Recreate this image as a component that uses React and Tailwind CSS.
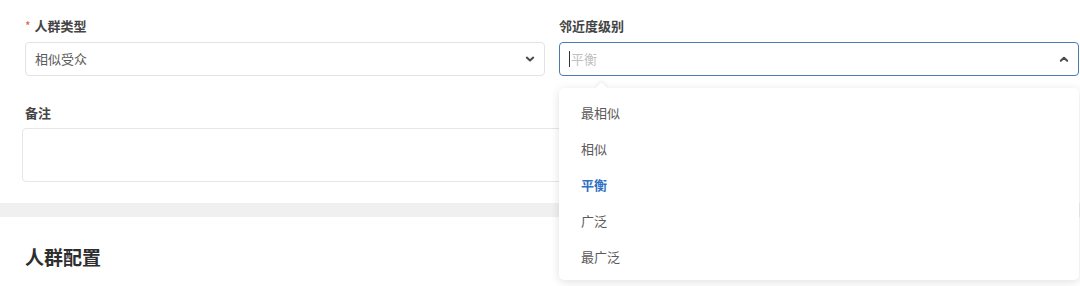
const levels = ['最相似', '相似', '平衡', '广泛', '最广泛']

function Chevron({ up }) {
  return (
    <svg className="w-[12px] h-[12px]" viewBox="0 0 12 12" fill="none" stroke="#4a4a4a" strokeWidth="2" strokeLinecap="round" strokeLinejoin="round">
      <path d={up ? 'M2.8 7.8L6 4.8 9.2 7.8' : 'M2.8 4.6L6 7.6 9.2 4.6'} />
    </svg>
  )
}

function Label({ children, required }) {
  return (
    <div className="h-[20px] flex items-center mb-[6px] text-[13px] font-bold text-[#444]">
      {required && <span className="text-[#e0603a] mr-[4px] text-[12px] font-normal">*</span>}
      {children}
    </div>
  )
}

export default function App() {
  return (
    <div className="w-[1080px] h-[286px] bg-white overflow-hidden" style={{ fontFamily: '"Noto Sans CJK SC", "Noto Sans", sans-serif' }}>
      <div className="pl-[25px] pt-[16px] pb-[21px]">
        <div className="grid grid-cols-[520px_520px] gap-x-[14px]">
          <div>
            <Label required>人群类型</Label>
            <div className="h-[34px] border border-[#e3e3e3] rounded-[4px] flex items-center justify-between pl-[9px] pr-[8px] text-[13px] text-[#5a5a5a]">
              <span>相似受众</span>
              <Chevron />
            </div>
          </div>

          <div className="relative">
            <Label>邻近度级别</Label>
            <div className="h-[34px] border border-[#4a7cb0] rounded-[4px] flex items-center justify-between pl-[9px] pr-[8px] text-[13px]">
              <span className="flex items-center text-[#c0c0c0]">
                <span className="w-px h-[16px] bg-[#333] mr-px"></span>
                平衡
              </span>
              <Chevron up />
            </div>

            {/* dropdown menu */}
            <div className="absolute left-0 right-0 top-[72px] z-10 bg-white rounded-[5px] shadow-[0_2px_10px_rgba(0,0,0,0.12)] pt-[7px] pb-[5px]">
              <div className="absolute left-[38px] -top-[4px] w-[9px] h-[9px] bg-white rotate-45 shadow-[-2px_-2px_4px_rgba(0,0,0,0.05)]"></div>
              {levels.map((l) => (
                <div
                  key={l}
                  className={`h-[36px] flex items-center pl-[22px] text-[13px] ${l === '平衡' ? 'text-[#2f6fc2] font-bold' : 'text-[#5a5a5a]'}`}
                >
                  {l}
                </div>
              ))}
            </div>
          </div>
        </div>

        <div className="mt-[27px]">
          <Label>备注</Label>
          <div className="-ml-[3px] -mt-px h-[54px] w-[1054px] border border-[#e6e6e6] rounded-[4px]"></div>
        </div>
      </div>

      <div className="h-[14px] bg-[#f0f0f0]"></div>

      <div className="pl-[25px] pt-[26px]">
        <h2 className="text-[19px] font-bold text-[#2e2e2e]">人群配置</h2>
      </div>
    </div>
  )
}
